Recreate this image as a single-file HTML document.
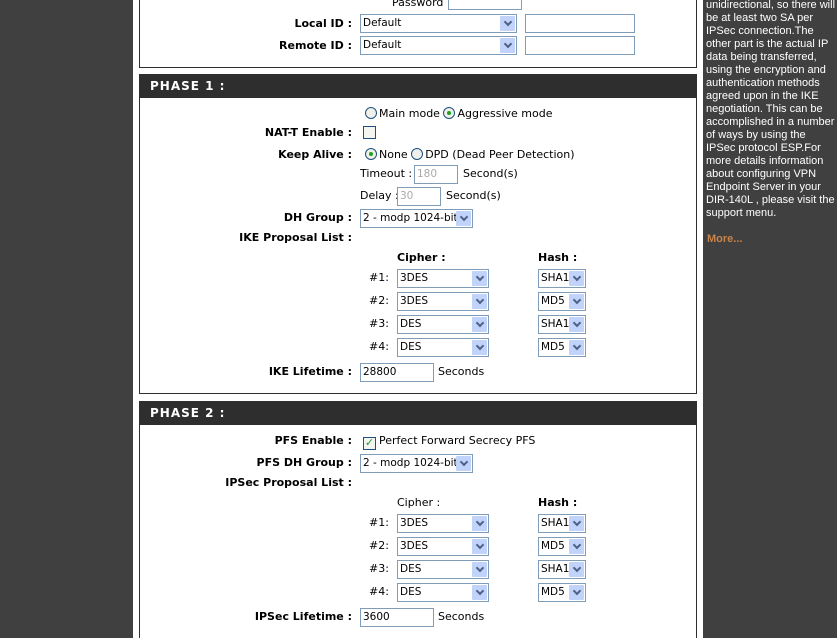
<!DOCTYPE html>
<html style="width:837px;height:638px;overflow:hidden"><head><meta charset="utf-8"><style>
*{margin:0;padding:0;box-sizing:border-box}
body{width:837px;height:638px;overflow:hidden;background:#fff;font-family:"DejaVu Sans","Liberation Sans",sans-serif;font-size:11px;color:#000;position:relative}
.a{position:absolute;white-space:nowrap}
.l{position:absolute;font-weight:bold;text-align:right;right:485px;white-space:nowrap;font-size:11px;line-height:14px}
.t{position:absolute;white-space:nowrap;line-height:14px;font-size:11px}
.s{position:absolute;height:19px;border:1px solid #7f9db9;background:#fff;font-size:10.5px;line-height:17px;padding-left:2px;white-space:nowrap;overflow:hidden}
.s:after{content:"";position:absolute;right:1px;top:1px;width:15px;height:15px;background:#c1d2fb;border-radius:1px}
.s i{position:absolute;right:5px;top:4px;width:6px;height:6px;border-right:2px solid #4d6185;border-bottom:2px solid #4d6185;transform:rotate(45deg);z-index:2}
.i{position:absolute;height:19px;border:1px solid #7f9db9;background:#fff;font-size:10.5px;line-height:17px;padding-left:2px;color:#000}
.g{color:#aaa}
.r{display:inline-block;width:12px;height:12px;border:1px solid #1c5180;border-radius:50%;background:#f0f0ea;vertical-align:-2px;position:relative;margin-right:2px}
.r.on:after{content:"";position:absolute;left:3px;top:3px;width:4px;height:4px;border-radius:50%;background:#21a121}
.c{display:inline-block;width:13px;height:13px;border:1px solid #1c5180;background:#f4f4f0;vertical-align:-2px;position:relative;margin-right:3px}
.box{position:absolute;left:139px;width:558px;border:1px solid #2e2e2e;border-top:none}
.hd{position:absolute;left:139px;width:558px;height:24px;background:#2e2e2e;color:#fff;font-weight:bold;font-size:12px;line-height:24px;padding-left:11px;letter-spacing:1px}
</style></head><body>
<div class="a" style="left:0;top:0;width:133px;height:638px;background:#404040"></div>
<div class="a" style="left:703px;top:0;width:134px;height:638px;background:#404040"></div>
<div class="box" style="top:-2px;height:70px"></div>
<div class="t" style="left:392px;top:-4px">Password</div>
<div class="i" style="left:448px;top:-9px;width:74px"></div>
<div class="l" style="top:17px">Local ID :</div>
<div class="s" style="left:360px;top:14px;width:157px">Default<i></i></div>
<div class="i" style="left:525px;top:14px;width:110px"></div>
<div class="l" style="top:39px">Remote ID :</div>
<div class="s" style="left:360px;top:36px;width:157px">Default<i></i></div>
<div class="i" style="left:525px;top:36px;width:110px"></div>

<div class="hd" style="top:74px">PHASE 1 :</div>
<div class="box" style="top:98px;height:296px"></div>
<div class="t" style="left:365px;top:107px"><span class="r"></span>Main mode <span class="r on"></span>Aggressive mode</div>
<div class="l" style="top:126px">NAT-T Enable :</div>
<div class="t" style="left:363px;top:126px"><span class="c"></span></div>
<div class="l" style="top:148px">Keep Alive :</div>
<div class="t" style="left:365px;top:148px"><span class="r on"></span>None <span class="r"></span>DPD (Dead Peer Detection)</div>
<div class="t" style="left:360px;top:167px">Timeout :</div>
<div class="i g" style="left:414px;top:165px;width:44px">180</div>
<div class="t" style="left:463px;top:167px">Second(s)</div>
<div class="t" style="left:360px;top:189px">Delay :</div>
<div class="i g" style="left:397px;top:187px;width:44px">30</div>
<div class="t" style="left:446px;top:189px">Second(s)</div>
<div class="l" style="top:211px">DH Group :</div>
<div class="s" style="left:360px;top:209px;width:113px">2 - modp 1024-bit<i></i></div>
<div class="l" style="top:231px">IKE Proposal List :</div>
<div class="t" style="left:397px;top:251px;font-weight:bold">Cipher :</div>
<div class="t" style="left:538px;top:251px;font-weight:bold">Hash :</div>
<div class="t" style="left:369px;top:271px">#1:</div><div class="s" style="left:397px;top:269px;width:92px">3DES<i></i></div><div class="s" style="left:538px;top:269px;width:48px">SHA1<i></i></div>
<div class="t" style="left:369px;top:294px">#2:</div><div class="s" style="left:397px;top:292px;width:92px">3DES<i></i></div><div class="s" style="left:538px;top:292px;width:48px">MD5<i></i></div>
<div class="t" style="left:369px;top:317px">#3:</div><div class="s" style="left:397px;top:315px;width:92px">DES<i></i></div><div class="s" style="left:538px;top:315px;width:48px">SHA1<i></i></div>
<div class="t" style="left:369px;top:340px">#4:</div><div class="s" style="left:397px;top:338px;width:92px">DES<i></i></div><div class="s" style="left:538px;top:338px;width:48px">MD5<i></i></div>
<div class="l" style="top:365px">IKE Lifetime :</div>
<div class="i" style="left:360px;top:363px;width:74px">28800</div>
<div class="t" style="left:438px;top:365px">Seconds</div>

<div class="hd" style="top:401px">PHASE 2 :</div>
<div class="box" style="top:425px;height:220px"></div>
<div class="l" style="top:434px">PFS Enable :</div>
<div class="t" style="left:363px;top:434px"><span class="c" style="color:#21a121;font-size:11px;line-height:10px;text-align:center;font-weight:bold">✓</span>Perfect Forward Secrecy PFS</div>
<div class="l" style="top:456px">PFS DH Group :</div>
<div class="s" style="left:360px;top:454px;width:113px">2 - modp 1024-bit<i></i></div>
<div class="l" style="top:476px">IPSec Proposal List :</div>
<div class="t" style="left:397px;top:496px">Cipher :</div>
<div class="t" style="left:538px;top:496px;font-weight:bold">Hash :</div>
<div class="t" style="left:369px;top:516px">#1:</div><div class="s" style="left:397px;top:514px;width:92px">3DES<i></i></div><div class="s" style="left:538px;top:514px;width:48px">SHA1<i></i></div>
<div class="t" style="left:369px;top:539px">#2:</div><div class="s" style="left:397px;top:537px;width:92px">3DES<i></i></div><div class="s" style="left:538px;top:537px;width:48px">MD5<i></i></div>
<div class="t" style="left:369px;top:562px">#3:</div><div class="s" style="left:397px;top:560px;width:92px">DES<i></i></div><div class="s" style="left:538px;top:560px;width:48px">SHA1<i></i></div>
<div class="t" style="left:369px;top:585px">#4:</div><div class="s" style="left:397px;top:583px;width:92px">DES<i></i></div><div class="s" style="left:538px;top:583px;width:48px">MD5<i></i></div>
<div class="l" style="top:610px">IPSec Lifetime :</div>
<div class="i" style="left:360px;top:608px;width:74px">3600</div>
<div class="t" style="left:438px;top:610px">Seconds</div>

<div class="a" style="left:706px;top:-1px;color:#fff;font-family:'Liberation Sans',sans-serif;font-size:11px;line-height:13px">unidirectional, so there will<br>be at least two SA per<br>IPSec connection.The<br>other part is the actual IP<br>data being transferred,<br>using the encryption and<br>authentication methods<br>agreed upon in the IKE<br>negotiation. This can be<br>accomplished in a number<br>of ways by using the<br>IPSec protocol ESP.For<br>more details information<br>about configuring VPN<br>Endpoint Server in your<br>DIR-140L , please visit the<br>support menu.</div>
<div class="a" style="left:707px;top:233px;color:#c8844b;font-weight:bold;font-family:'Liberation Sans',sans-serif;font-size:11px">More...</div>
</body></html>
